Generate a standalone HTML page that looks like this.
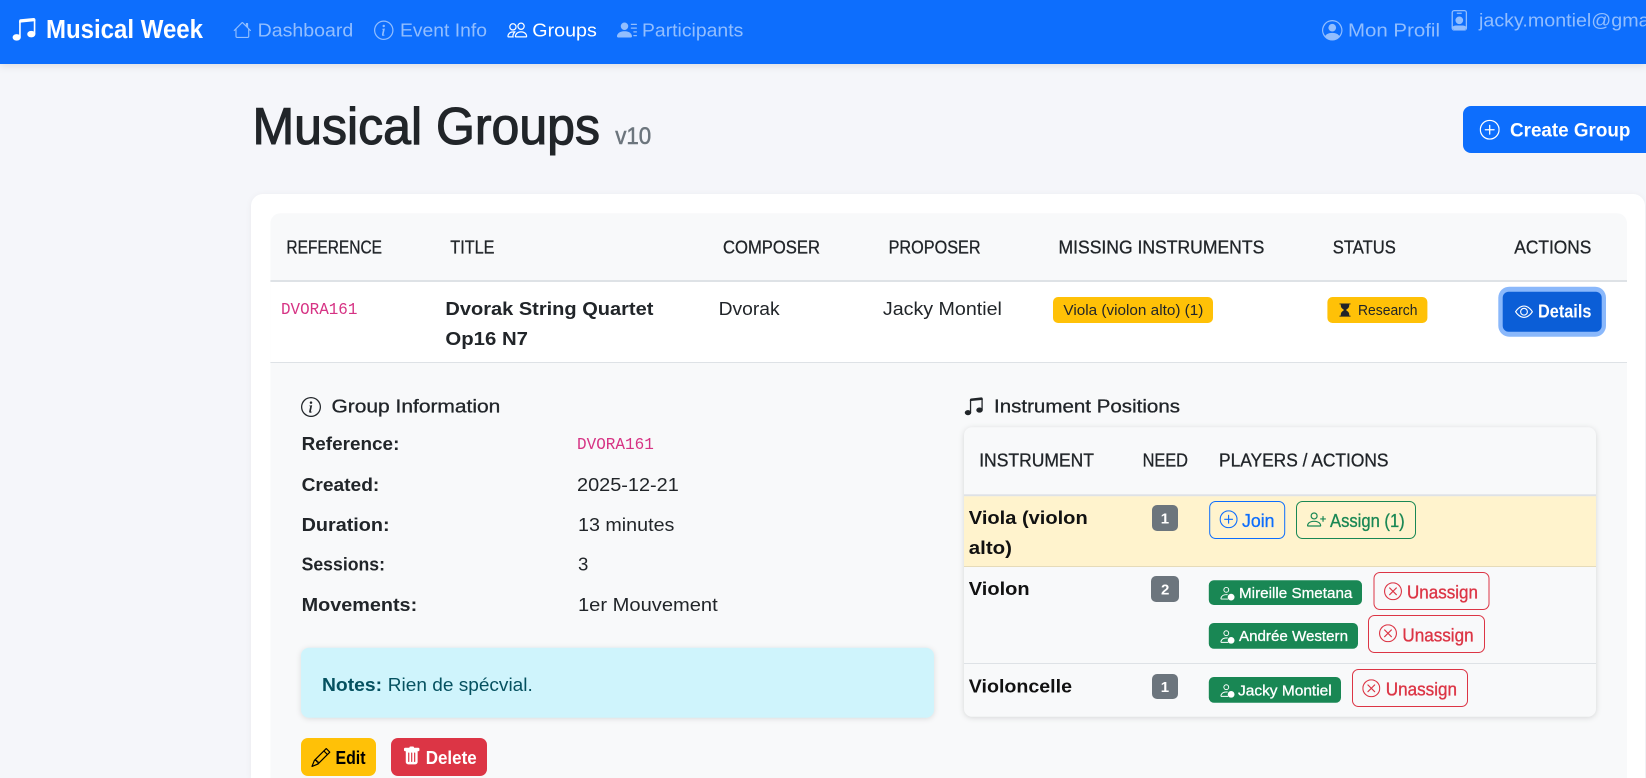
<!DOCTYPE html>
<html lang="en">
<head>
<meta charset="utf-8">
<title>Musical Groups</title>
<style>
html,body{margin:0;padding:0;width:1646px;height:778px;overflow:hidden;background:#f5f6fa}
svg{display:block;position:absolute;left:0;top:0}
text{font-family:"Liberation Sans",Arial,sans-serif;font-size:18.6px;fill:#212529;white-space:pre}
.b{font-weight:bold}
.th{font-size:18.4px;stroke:#212529;stroke-width:.3px}
.nav{fill:#92befe}
.code{font-family:"Liberation Mono",monospace;font-size:17px;fill:#d63384}
.small{font-size:15px}
</style>
</head>
<body>
<svg width="1646" height="778" viewBox="0 0 1646 778">
<defs>
<symbol id="music" viewBox="0 0 16 16"><path d="M6 13c0 1.105-1.12 2-2.5 2S1 14.105 1 13c0-1.104 1.12-2 2.5-2s2.5.896 2.5 2zm9-2c0 1.105-1.12 2-2.5 2s-2.5-.895-2.5-2 1.12-2 2.5-2 2.5.895 2.5 2z"/><path fill-rule="evenodd" d="M14 11V2h1v9h-1zM6 3v10H5V3h1z"/><path d="M5 2.905a1 1 0 0 1 .9-.995l8-.8a1 1 0 0 1 1.1.995V3L5 4V2.905z"/></symbol>
<symbol id="house" viewBox="0 0 16 16"><path d="M8.707 1.5a1 1 0 0 0-1.414 0L.646 8.146a.5.5 0 0 0 .708.708L2 8.207V13.5A1.5 1.5 0 0 0 3.5 15h9a1.5 1.5 0 0 0 1.5-1.5V8.207l.646.647a.5.5 0 0 0 .708-.708L13 5.793V2.5a.5.5 0 0 0-.5-.5h-1a.5.5 0 0 0-.5.5v1.293L8.707 1.5ZM13 7.207V13.5a.5.5 0 0 1-.5.5h-9a.5.5 0 0 1-.5-.5V7.207l5-5 5 5Z"/></symbol>
<symbol id="info" viewBox="0 0 16 16"><path d="M8 15A7 7 0 1 1 8 1a7 7 0 0 1 0 14zm0 1A8 8 0 1 0 8 0a8 8 0 0 0 0 16z"/><path d="m8.93 6.588-2.29.287-.082.38.45.083c.294.07.352.176.288.469l-.738 3.468c-.194.897.105 1.319.808 1.319.545 0 1.178-.252 1.465-.598l.088-.416c-.2.176-.492.246-.686.246-.275 0-.375-.193-.304-.533L8.93 6.588zM9 4.5a1 1 0 1 1-2 0 1 1 0 0 1 2 0z"/></symbol>
<symbol id="people" viewBox="0 0 16 16"><path d="M15 14s1 0 1-1-1-4-5-4-5 3-5 4 1 1 1 1h8Zm-7.978-1A.261.261 0 0 1 7 12.996c.001-.264.167-1.03.76-1.72C8.312 10.629 9.282 10 11 10c1.717 0 2.687.63 3.24 1.276.593.69.758 1.457.76 1.72l-.008.002a.274.274 0 0 1-.014.002H7.022ZM11 7a2 2 0 1 0 0-4 2 2 0 0 0 0 4Zm3-2a3 3 0 1 1-6 0 3 3 0 0 1 6 0ZM6.936 9.28a5.88 5.88 0 0 0-1.23-.247A7.35 7.35 0 0 0 5 9c-4 0-5 3-5 4 0 .667.333 1 1 1h4.216A2.238 2.238 0 0 1 5 13c0-1.01.377-2.042 1.09-2.904.243-.294.526-.569.846-.816ZM4.92 10A5.493 5.493 0 0 0 4 13H1c0-.26.164-1.03.76-1.724.545-.636 1.492-1.256 3.16-1.275ZM1.5 5.5a3 3 0 1 1 6 0 3 3 0 0 1-6 0Zm3-2a2 2 0 1 0 0 4 2 2 0 0 0 0-4Z"/></symbol>
<symbol id="lines" viewBox="0 0 16 16"><path d="M6 8a3 3 0 1 0 0-6 3 3 0 0 0 0 6zm-5 6s-1 0-1-1 1-4 6-4 6 3 6 4-1 1-1 1H1zM11 3.5a.5.5 0 0 1 .5-.5h4a.5.5 0 0 1 0 1h-4a.5.5 0 0 1-.5-.5zm.5 2.5a.5.5 0 0 0 0 1h4a.5.5 0 0 0 0-1h-4zm2 3a.5.5 0 0 0 0 1h2a.5.5 0 0 0 0-1h-2zm0 3a.5.5 0 0 0 0 1h2a.5.5 0 0 0 0-1h-2z"/></symbol>
<symbol id="pcircle" viewBox="0 0 16 16"><path d="M11 6a3 3 0 1 1-6 0 3 3 0 0 1 6 0z"/><path fill-rule="evenodd" d="M0 8a8 8 0 1 1 16 0A8 8 0 0 1 0 8zm8-7a7 7 0 0 0-5.468 11.37C3.242 11.226 4.805 10 8 10s4.757 1.225 5.468 2.37A7 7 0 0 0 8 1z"/></symbol>
<symbol id="pbadge" viewBox="0 0 16 16"><path d="M2 2a2 2 0 0 1 2-2h8a2 2 0 0 1 2 2v12a2 2 0 0 1-2 2H4a2 2 0 0 1-2-2V2zm1 0v12a1 1 0 0 0 1 1h8a1 1 0 0 0 1-1V2a1 1 0 0 0-1-1H4a1 1 0 0 0-1 1zm3.5 1a.5.5 0 0 1 0-1h3a.5.5 0 0 1 0 1h-3zM8 11a3 3 0 1 0 0-6 3 3 0 0 0 0 6zm-5 1.8c.9-.9 2.4-.8 5-.8s4.100-.1 5 .8V15H3z" fill-rule="evenodd"/></symbol>
<symbol id="plus" viewBox="0 0 16 16"><path d="M8 15A7 7 0 1 1 8 1a7 7 0 0 1 0 14zm0 1A8 8 0 1 0 8 0a8 8 0 0 0 0 16z"/><path d="M8 4a.5.5 0 0 1 .5.5v3h3a.5.5 0 0 1 0 1h-3v3a.5.5 0 0 1-1 0v-3h-3a.5.5 0 0 1 0-1h3v-3A.5.5 0 0 1 8 4z"/></symbol>
<symbol id="xc" viewBox="0 0 16 16"><path d="M8 15A7 7 0 1 1 8 1a7 7 0 0 1 0 14zm0 1A8 8 0 1 0 8 0a8 8 0 0 0 0 16z"/><path d="M4.646 4.646a.5.5 0 0 1 .708 0L8 7.293l2.646-2.647a.5.5 0 0 1 .708.708L8.707 8l2.647 2.646a.5.5 0 0 1-.708.708L8 8.707l-2.646 2.647a.5.5 0 0 1-.708-.708L7.293 8 4.646 5.354a.5.5 0 0 1 0-.708z"/></symbol>
<symbol id="hour" viewBox="0 0 16 16"><path d="M2.500 15a.5.5 0 1 1 0-1h1v-1a4.500 4.500 0 0 1 2.557-4.060c.29-.139.443-.377.443-.59v-.7c0-.213-.154-.451-.443-.59A4.500 4.500 0 0 1 3.500 3V2h-1a.5.5 0 0 1 0-1h11a.5.5 0 0 1 0 1h-1v1a4.500 4.500 0 0 1-2.557 4.060c-.29.139-.443.377-.443.59v.7c0 .213.154.451.443.59A4.500 4.500 0 0 1 12.500 13v1h1a.5.5 0 0 1 0 1h-11z"/></symbol>
<symbol id="eye" viewBox="0 0 16 16"><path d="M16 8s-3-5.5-8-5.5S0 8 0 8s3 5.5 8 5.5S16 8 16 8zM1.173 8a13.133 13.133 0 0 1 1.660-2.043C4.120 4.668 5.880 3.500 8 3.500c2.120 0 3.879 1.168 5.168 2.457A13.133 13.133 0 0 1 14.828 8c-.058.087-.122.183-.195.288-.335.48-.83 1.120-1.465 1.755C11.879 11.332 10.119 12.500 8 12.500c-2.120 0-3.879-1.168-5.168-2.457A13.134 13.134 0 0 1 1.172 8z"/><path d="M8 5.500a2.500 2.500 0 1 0 0 5 2.500 2.500 0 0 0 0-5zM4.500 8a3.500 3.500 0 1 1 7 0 3.500 3.500 0 0 1-7 0z"/></symbol>
<symbol id="pencil" viewBox="0 0 16 16"><path d="M12.146.146a.5.5 0 0 1 .708 0l3 3a.5.5 0 0 1 0 .708l-10 10a.5.5 0 0 1-.168.11l-5 2a.5.5 0 0 1-.65-.65l2-5a.5.5 0 0 1 .11-.168l10-10zM11.207 2.500 13.500 4.793 14.793 3.500 12.500 1.207 11.207 2.500zm1.586 3L10.500 3.207 4 9.707V10h.5a.5.5 0 0 1 .5.5v.5h.5a.5.5 0 0 1 .5.5v.5h.293l6.500-6.500zm-9.761 5.175-.106.106-1.528 3.821 3.821-1.528.106-.106A.5.5 0 0 1 5 12.500V12h-.5a.5.5 0 0 1-.5-.5V11h-.5a.5.5 0 0 1-.468-.325z"/></symbol>
<symbol id="trash" viewBox="0 0 16 16"><path d="M2.500 1a1 1 0 0 0-1 1v1a1 1 0 0 0 1 1H3v9a2 2 0 0 0 2 2h6a2 2 0 0 0 2-2V4h.5a1 1 0 0 0 1-1V2a1 1 0 0 0-1-1H10a1 1 0 0 0-1-1H7a1 1 0 0 0-1 1H2.500zm3 4a.5.5 0 0 1 .5.5v7a.5.5 0 0 1-1 0v-7a.5.5 0 0 1 .5-.5zM8 5a.5.5 0 0 1 .5.5v7a.5.5 0 0 1-1 0v-7A.5.5 0 0 1 8 5zm3 .5v7a.5.5 0 0 1-1 0v-7a.5.5 0 0 1 1 0z"/></symbol>
<symbol id="padd" viewBox="0 0 16 16"><path d="M6 8a3 3 0 1 0 0-6 3 3 0 0 0 0 6zm2-3a2 2 0 1 1-4 0 2 2 0 0 1 4 0zm4 8c0 1-1 1-1 1H1s-1 0-1-1 1-4 6-4 6 3 6 4zm-1-.004c-.001-.246-.154-.986-.832-1.664C9.516 10.680 8.289 10 6 10c-2.290 0-3.516.68-4.168 1.332-.678.678-.83 1.418-.832 1.664h10z"/><path d="M13.500 5a.5.5 0 0 1 .5.5V7h1.500a.5.5 0 0 1 0 1H14v1.500a.5.5 0 0 1-1 0V8h-1.500a.5.5 0 0 1 0-1H13V5.500a.5.5 0 0 1 .5-.5z"/></symbol>
<symbol id="pdot" viewBox="0 0 16 16"><path d="M7 8a3 3 0 1 0 0-6 3 3 0 0 0 0 6zm2-3a2 2 0 1 1-4 0 2 2 0 0 1 4 0zM2 15s-1 0-1-1 1-4.500 6-4.500c.6 0 1.100 0 1.600.1l-.5 1C7.800 10.500 7.400 10.500 7 10.500c-2.600 0-4.600 1-5 3.500h7v1H2z"/><circle cx="12" cy="12.500" r="3.500"/></symbol>
</defs>

<!-- card -->
<path d="M251 778V206a12 12 0 0 1 12-12H1633a12 12 0 0 1 12 12V778z" fill="#fff" style="filter:drop-shadow(0 1px 3px rgba(0,0,0,.05))"/>
<!-- inner table -->
<path d="M270.4 778V223.300a10 10 0 0 1 10-10H1617a10 10 0 0 1 10 10V778z" fill="#f8f9fa"/>
<rect x="270.4" y="280" width="1356.6" height="2" fill="#dee2e6"/>
<rect x="270.4" y="282" width="1356.6" height="80" fill="#fff"/>
<rect x="270.4" y="362" width="1356.6" height="1" fill="#dee2e6"/>

<!-- navbar -->
<rect x="0" y="0" width="1646" height="64" fill="#0d6efd" style="filter:drop-shadow(0 2px 4px rgba(0,0,0,.1))"/>
<use href="#music" x="11" y="16.200" width="26" height="26" fill="#fff"/>
<text x="46" y="38" class="b" style="fill:#fff;font-size:25.500px" textLength="157" lengthAdjust="spacingAndGlyphs">Musical Week</text>
<use href="#house" x="233.100" y="20.700" width="18.500" height="18.500" fill="#92befe"/>
<text x="257.700" y="36.700" class="nav" textLength="95.600" lengthAdjust="spacingAndGlyphs">Dashboard</text>
<use href="#info" x="374" y="20.500" width="19.500" height="19.500" fill="#92befe"/>
<text x="400" y="36.700" class="nav" textLength="87" lengthAdjust="spacingAndGlyphs">Event Info</text>
<use href="#people" x="507.300" y="20" width="20" height="20" fill="#fff"/>
<text x="532.300" y="36.700" style="fill:#fff" textLength="64.500" lengthAdjust="spacingAndGlyphs">Groups</text>
<use href="#lines" x="617" y="20" width="20" height="20" fill="#92befe"/>
<text x="642" y="36.700" class="nav" textLength="101.300" lengthAdjust="spacingAndGlyphs">Participants</text>
<use href="#pcircle" x="1322" y="20" width="20.500" height="20.500" fill="#92befe"/>
<text x="1348" y="36.700" class="nav" textLength="92" lengthAdjust="spacingAndGlyphs">Mon Profil</text>
<use href="#pbadge" x="1449" y="10" width="20.600" height="20.600" fill="#92befe"/>
<text x="1479" y="26.700" class="nav" textLength="222" lengthAdjust="spacingAndGlyphs">jacky.montiel@gmail.com</text>

<!-- heading -->
<text x="252.500" y="144" style="font-size:52px;stroke:#212529;stroke-width:1.100px" textLength="347.500" lengthAdjust="spacingAndGlyphs">Musical Groups</text>
<text x="615.200" y="144" style="font-size:24px;fill:#6c757d;stroke:#6c757d;stroke-width:.5px" textLength="36" lengthAdjust="spacingAndGlyphs">v10</text>
<rect x="1463" y="106" width="190" height="47" rx="8" fill="#0d6efd"/>
<use href="#plus" x="1479.700" y="119.700" width="20" height="20" fill="#fff"/>
<text x="1510" y="136.700" class="b" style="fill:#fff;font-size:19px" textLength="120.400" lengthAdjust="spacingAndGlyphs">Create Group</text>

<!-- table head -->
<text x="286.400" y="253.700" class="th" textLength="95.600" lengthAdjust="spacingAndGlyphs">REFERENCE</text>
<text x="450.300" y="253.700" class="th" textLength="44.200" lengthAdjust="spacingAndGlyphs">TITLE</text>
<text x="723" y="253.700" class="th" textLength="97" lengthAdjust="spacingAndGlyphs">COMPOSER</text>
<text x="888.600" y="253.700" class="th" textLength="92" lengthAdjust="spacingAndGlyphs">PROPOSER</text>
<text x="1058.500" y="253.700" class="th" textLength="205.800" lengthAdjust="spacingAndGlyphs">MISSING INSTRUMENTS</text>
<text x="1332.800" y="253.700" class="th" textLength="63" lengthAdjust="spacingAndGlyphs">STATUS</text>
<text x="1514.300" y="253.700" class="th" textLength="77" lengthAdjust="spacingAndGlyphs">ACTIONS</text>

<!-- row -->
<text x="281" y="314" class="code" textLength="76.400" lengthAdjust="spacingAndGlyphs">DVORA161</text>
<text x="445.400" y="315" class="b" textLength="208" lengthAdjust="spacingAndGlyphs">Dvorak String Quartet</text>
<text x="445.400" y="345" class="b" textLength="82.600" lengthAdjust="spacingAndGlyphs">Op16 N7</text>
<text x="718.600" y="315" textLength="61" lengthAdjust="spacingAndGlyphs">Dvorak</text>
<text x="882.900" y="315" textLength="119" lengthAdjust="spacingAndGlyphs">Jacky Montiel</text>
<rect x="1053" y="297" width="160" height="26" rx="5" fill="#ffc107"/>
<text x="1063.400" y="315" class="small" textLength="140" lengthAdjust="spacingAndGlyphs">Viola (violon alto) (1)</text>
<rect x="1327.400" y="297" width="100" height="26" rx="5" fill="#ffc107"/>
<use href="#hour" x="1337.500" y="302.500" width="15" height="15" fill="#212529"/>
<text x="1358" y="315" class="small" textLength="59.500" lengthAdjust="spacingAndGlyphs">Research</text>
<rect x="1498.300" y="286.700" width="107.700" height="50" rx="11" fill="#8ab8fb"/>
<rect x="1502.700" y="291.700" width="99" height="40" rx="6" fill="#0b5ed7"/>
<use href="#eye" x="1515" y="302.700" width="18" height="18" fill="#fff"/>
<text x="1538" y="317.300" class="b" style="fill:#fff" textLength="53.400" lengthAdjust="spacingAndGlyphs">Details</text>

<!-- group info -->
<use href="#info" x="301" y="397" width="20" height="20" fill="#212529"/>
<text x="331.500" y="412.700" style="stroke:#212529;stroke-width:.3px" textLength="168.800" lengthAdjust="spacingAndGlyphs">Group Information</text>
<text x="301.600" y="450" class="b" textLength="97.800" lengthAdjust="spacingAndGlyphs">Reference:</text>
<text x="301.600" y="491" class="b" textLength="77.700" lengthAdjust="spacingAndGlyphs">Created:</text>
<text x="301.600" y="531" class="b" textLength="88" lengthAdjust="spacingAndGlyphs">Duration:</text>
<text x="301.600" y="570.700" class="b" textLength="83.400" lengthAdjust="spacingAndGlyphs">Sessions:</text>
<text x="301.600" y="611" class="b" textLength="115.600" lengthAdjust="spacingAndGlyphs">Movements:</text>
<text x="577" y="449" class="code" textLength="76.800" lengthAdjust="spacingAndGlyphs">DVORA161</text>
<text x="577" y="491" textLength="101.800" lengthAdjust="spacingAndGlyphs">2025-12-21</text>
<text x="578" y="531" textLength="96.400" lengthAdjust="spacingAndGlyphs">13 minutes</text>
<text x="578" y="570.700">3</text>
<text x="578" y="611" textLength="139.700" lengthAdjust="spacingAndGlyphs">1er Mouvement</text>

<rect x="301" y="647.700" width="633" height="70" rx="8" fill="#cff4fc" style="filter:drop-shadow(0 1px 3px rgba(0,0,0,.12))"/>
<text x="322" y="691" class="b" style="fill:#055160" textLength="60" lengthAdjust="spacingAndGlyphs">Notes:</text>
<text x="387.800" y="691" style="fill:#055160" textLength="145" lengthAdjust="spacingAndGlyphs">Rien de spécvial.</text>

<rect x="301" y="738" width="75" height="38" rx="7" fill="#ffc107"/>
<use href="#pencil" x="311.400" y="748" width="19" height="19" fill="#000"/>
<text x="335.500" y="764" class="b" style="fill:#000" textLength="30" lengthAdjust="spacingAndGlyphs">Edit</text>
<rect x="391" y="738" width="96" height="38" rx="7" fill="#dc3545"/>
<use href="#trash" x="402.200" y="746.500" width="19" height="19" fill="#fff"/>
<text x="425.700" y="764" class="b" style="fill:#fff" textLength="51" lengthAdjust="spacingAndGlyphs">Delete</text>

<!-- instrument positions -->
<use href="#music" x="963.500" y="396" width="20.500" height="20.500" fill="#212529"/>
<text x="994" y="412.700" style="stroke:#212529;stroke-width:.3px" textLength="186" lengthAdjust="spacingAndGlyphs">Instrument Positions</text>
<rect x="964" y="427.300" width="632" height="289.400" rx="8" fill="#f8f9fa" style="filter:drop-shadow(0 1px 3px rgba(0,0,0,.14))"/>
<text x="979.200" y="466.500" class="th" textLength="114.800" lengthAdjust="spacingAndGlyphs">INSTRUMENT</text>
<text x="1142.600" y="466.500" class="th" textLength="45.400" lengthAdjust="spacingAndGlyphs">NEED</text>
<text x="1219" y="466.500" class="th" textLength="169.500" lengthAdjust="spacingAndGlyphs">PLAYERS / ACTIONS</text>
<rect x="964" y="494.300" width="632" height="2" fill="#dee2e6"/>
<rect x="964" y="496.300" width="632" height="69.700" fill="#fff3cd"/>
<rect x="964" y="566" width="632" height="1" fill="#e6dbb9"/>
<rect x="964" y="663" width="632" height="1" fill="#dee2e6"/>

<text x="968.800" y="524" class="b" style="fill:#111" textLength="118.900" lengthAdjust="spacingAndGlyphs">Viola (violon</text>
<text x="968.800" y="554" class="b" style="fill:#111" textLength="43.200" lengthAdjust="spacingAndGlyphs">alto)</text>
<rect x="1152" y="505" width="26" height="26" rx="5" fill="#6c757d"/>
<text x="1160.700" y="523.500" class="b small" style="fill:#fff">1</text>
<rect x="1209.700" y="501.500" width="75" height="37" rx="6" fill="none" stroke="#0d6efd"/>
<use href="#plus" x="1219.600" y="510.300" width="18" height="18" fill="#0d6efd"/>
<text x="1242" y="527" style="fill:#0d6efd;stroke:#0d6efd;stroke-width:.3px" textLength="32.500" lengthAdjust="spacingAndGlyphs">Join</text>
<rect x="1296.500" y="501.500" width="119" height="37" rx="6" fill="none" stroke="#198754"/>
<use href="#padd" x="1307" y="510" width="19" height="19" fill="#198754"/>
<text x="1330" y="527" style="fill:#198754;stroke:#198754;stroke-width:.3px" textLength="74.700" lengthAdjust="spacingAndGlyphs">Assign (1)</text>

<text x="968.800" y="595" class="b" style="fill:#111" textLength="60.800" lengthAdjust="spacingAndGlyphs">Violon</text>
<rect x="1151" y="576" width="28" height="26" rx="5" fill="#6c757d"/>
<text x="1161" y="594.500" class="b small" style="fill:#fff">2</text>
<rect x="1208.800" y="580.300" width="153.200" height="24.700" rx="5" fill="#198754"/>
<use href="#pdot" x="1219.500" y="585" width="15.500" height="15.500" fill="#fff"/>
<text x="1239" y="598" class="small" style="fill:#fff;stroke:#fff;stroke-width:.3px" textLength="113.400" lengthAdjust="spacingAndGlyphs">Mireille Smetana</text>
<rect x="1374" y="572.500" width="115" height="37" rx="6" fill="none" stroke="#dc3545"/>
<use href="#xc" x="1384" y="582.300" width="18" height="18" fill="#dc3545"/>
<text x="1407" y="598.300" style="fill:#dc3545;stroke:#dc3545;stroke-width:.35px" textLength="71" lengthAdjust="spacingAndGlyphs">Unassign</text>

<rect x="1208.800" y="623" width="149.200" height="25.700" rx="5" fill="#198754"/>
<use href="#pdot" x="1219.500" y="628.300" width="15.500" height="15.500" fill="#fff"/>
<text x="1239" y="641" class="small" style="fill:#fff;stroke:#fff;stroke-width:.3px" textLength="109" lengthAdjust="spacingAndGlyphs">Andrée Western</text>
<rect x="1368.500" y="615.500" width="116" height="37" rx="6" fill="none" stroke="#dc3545"/>
<use href="#xc" x="1379" y="624.300" width="18" height="18" fill="#dc3545"/>
<text x="1402.400" y="641.300" style="fill:#dc3545;stroke:#dc3545;stroke-width:.35px" textLength="71.200" lengthAdjust="spacingAndGlyphs">Unassign</text>

<text x="968.800" y="692.300" class="b" style="fill:#111" textLength="103.200" lengthAdjust="spacingAndGlyphs">Violoncelle</text>
<rect x="1152" y="674" width="26" height="25" rx="5" fill="#6c757d"/>
<text x="1160.700" y="692" class="b small" style="fill:#fff">1</text>
<rect x="1208.800" y="677" width="132.200" height="25.700" rx="5" fill="#198754"/>
<use href="#pdot" x="1219.500" y="682.300" width="15.500" height="15.500" fill="#fff"/>
<text x="1238" y="695.500" class="small" style="fill:#fff;stroke:#fff;stroke-width:.3px" textLength="93.700" lengthAdjust="spacingAndGlyphs">Jacky Montiel</text>
<rect x="1352.500" y="669.500" width="115" height="37" rx="6" fill="none" stroke="#dc3545"/>
<use href="#xc" x="1362.300" y="679.300" width="18" height="18" fill="#dc3545"/>
<text x="1385.800" y="695.700" style="fill:#dc3545;stroke:#dc3545;stroke-width:.35px" textLength="71.200" lengthAdjust="spacingAndGlyphs">Unassign</text>
</svg>
</body>
</html>
